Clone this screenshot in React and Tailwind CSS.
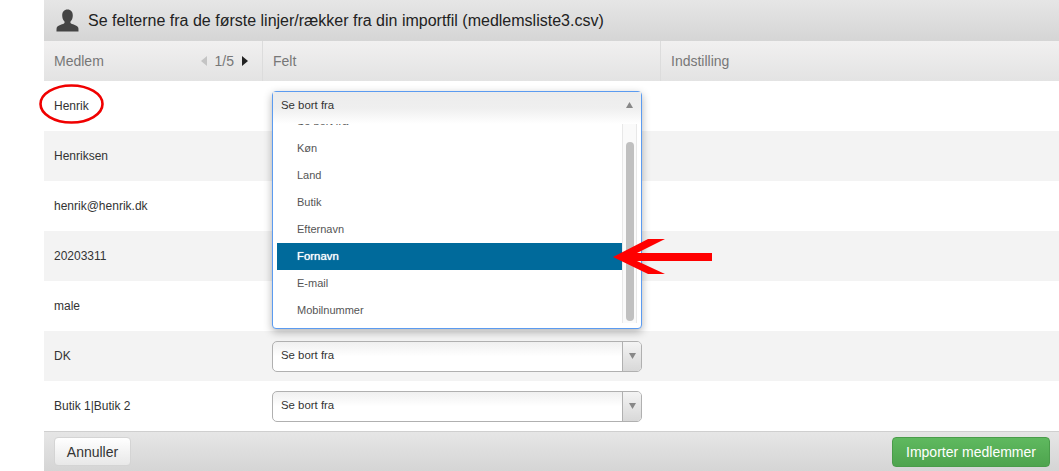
const rows = ["Henrik", "Henriksen", "henrik@henrik.dk", "20203311", "male", "DK", "Butik 1|Butik 2"];
const options = ["Køn", "Land", "Butik", "Efternavn", "Fornavn", "E-mail", "Mobilnummer"];

const SelectBox = () => (
  <div className="flex h-[31px] w-[370px] rounded-[5px] border border-[#b0b0b0] bg-gradient-to-b from-[#f0f0f0] via-white to-white text-[11.4px] text-[#333]">
    <div className="flex-1 pl-[8px] leading-[27px]">Se bort fra</div>
    <div className="flex w-[19px] items-center justify-center rounded-r-[4px] border-l border-[#b0b0b0] bg-gradient-to-b from-[#f4f4f4] to-[#d8d8d8]">
      <svg width="7" height="6" viewBox="0 0 7 6">
        <path d="M0 0h7L3.5 6z" fill="#888" />
      </svg>
    </div>
  </div>
);

const OpenSelect = () => (
  <div className="absolute left-0 top-0 z-10 h-[238px] w-[370px] rounded-[4px] border border-[#5b9bf0] bg-white shadow-[0_3px_8px_rgba(0,0,0,0.3)]">
    <div className="flex h-[32px] items-start justify-between bg-gradient-to-b from-[#ececec] via-[#efefef] to-white pl-[8px] pr-[8px] pt-[5px] text-[11.4px] text-[#333]">
      <span>Se bort fra</span>
      <svg width="7" height="6" viewBox="0 0 7 6" className="mt-[5px]">
        <path d="M0 6h7L3.5 0z" fill="#888" />
      </svg>
    </div>
    <div className="flex h-[199px] pl-[4px]">
      <div className="h-[199px] w-[345px] overflow-hidden text-[11px] text-[#555]">
        <div className="-mt-[16px]">
          <div className="h-[27px] pl-[20px] leading-[27px]">Se bort fra</div>
          {options.map((o) => (
            <div
              key={o}
              className={
                o === "Fornavn"
                  ? "h-[27px] bg-[#006a9b] pl-[20px] text-[11.4px] leading-[27px] text-white [text-shadow:0_0_1px_#fff]"
                  : "h-[27px] pl-[20px] leading-[27px]"
              }
            >
              {o}
            </div>
          ))}
        </div>
      </div>
      <div className="h-[199px] w-[15px] border-x border-[#e8e8e8] bg-[#fafafa] pl-[3px] pt-[18px]">
        <div className="h-[179px] w-[8px] rounded-full bg-[#c0c0c0]" />
      </div>
    </div>
  </div>
);

const App = () => {
  return (
    <div className="relative h-[471px] w-[1059px] overflow-hidden bg-white pl-[44px] font-['Liberation_Sans',Arial,sans-serif]">
      <div className="flex h-[41px] items-center bg-gradient-to-b from-[#e6e6e6] to-[#d5d5d5] pl-[12px] text-[16px] text-[#222]">
        <svg width="23" height="23" viewBox="0 0 23 23" className="mr-[9px]">
          <path
            d="M11.5 0.5c3.4 0 5.3 2.6 5.3 5.9 0 2.5-.9 4.6-2.1 5.9-.5.6-.4 1.8.3 2.2 2.4 1.2 6.6 2 7.3 4.3.2.8.2 2.8.2 3.7H.5c0-.9 0-2.9.2-3.7.7-2.3 4.9-3.1 7.3-4.3.7-.4.8-1.6.3-2.2-1.2-1.3-2.1-3.4-2.1-5.9 0-3.3 1.9-5.9 5.3-5.9z"
            fill="#444"
          />
        </svg>
        Se felterne fra de første linjer/rækker fra din importfil (medlemsliste3.csv)
      </div>

      <div className="grid h-[40px] grid-cols-[219px_398px_1fr] bg-gradient-to-b from-[#f1f0f0] to-[#e3e3e3] text-[14px] leading-[40px] text-[#777]">
        <div className="flex items-center justify-between border-r border-[#dcdcdc] pl-[10px] pr-[14px]">
          <span>Medlem</span>
          <div className="flex items-center gap-[8px]">
            <svg width="6" height="10" viewBox="0 0 6 10">
              <path d="M6 0v10L0 5z" fill="#c4c4c4" />
            </svg>
            <span>1/5</span>
            <svg width="6" height="10" viewBox="0 0 6 10">
              <path d="M0 0v10l6-5z" fill="#222" />
            </svg>
          </div>
        </div>
        <div className="border-r border-[#dcdcdc] pl-[10px]">Felt</div>
        <div className="pl-[10px]">Indstilling</div>
      </div>

      {rows.map((r, i) => (
        <div
          key={r}
          className={
            i % 2 === 0
              ? "grid h-[50px] grid-cols-[219px_398px_1fr] items-center bg-white text-[12px] text-[#333]"
              : "grid h-[50px] grid-cols-[219px_398px_1fr] items-center bg-[#f3f3f3] text-[12px] text-[#333]"
          }
        >
          <div className="relative pl-[10px]">
            {r}
            {i === 0 && (
              <svg width="66" height="42" viewBox="0 0 66 42" className="absolute -left-[5px] top-[-14px]">
                <ellipse cx="32.5" cy="21" rx="31" ry="18.5" fill="none" stroke="#f00000" strokeWidth="2.6" />
              </svg>
            )}
          </div>
          <div className="relative h-[31px] pl-[9px]">
            {i >= 5 && <SelectBox />}
            {i === 0 && (
              <div className="absolute left-[9px] top-0 h-[238px] w-[370px]">
                <OpenSelect />
              </div>
            )}
          </div>
          <div />
        </div>
      ))}

      <div className="flex h-[40px] items-start justify-between border-t border-[#cfcfcf] bg-gradient-to-b from-[#e6e6e6] to-[#d5d5d5] pl-[10px] pr-[9px] pt-[5px] text-[14px]">
        <button className="h-[29px] w-[77px] rounded-[4px] border border-[#d4d4d4] bg-gradient-to-b from-white to-[#e8e8e8] pt-[1px] text-[#333]">
          Annuller
        </button>
        <button className="h-[30px] w-[158px] rounded-[4px] border border-[#4a9c4a] bg-gradient-to-b from-[#5fb95f] to-[#4ea44e] pt-[1px] text-white">
          Importer medlemmer
        </button>
      </div>

      <svg width="102" height="38" viewBox="0 0 102 38" className="absolute left-[611px] top-[238px] z-20">
        <path d="M2 19 37 1H54L26 15H101V23H26L54 36H37z" fill="#ff0000" />
      </svg>
    </div>
  );
};

export default App;
